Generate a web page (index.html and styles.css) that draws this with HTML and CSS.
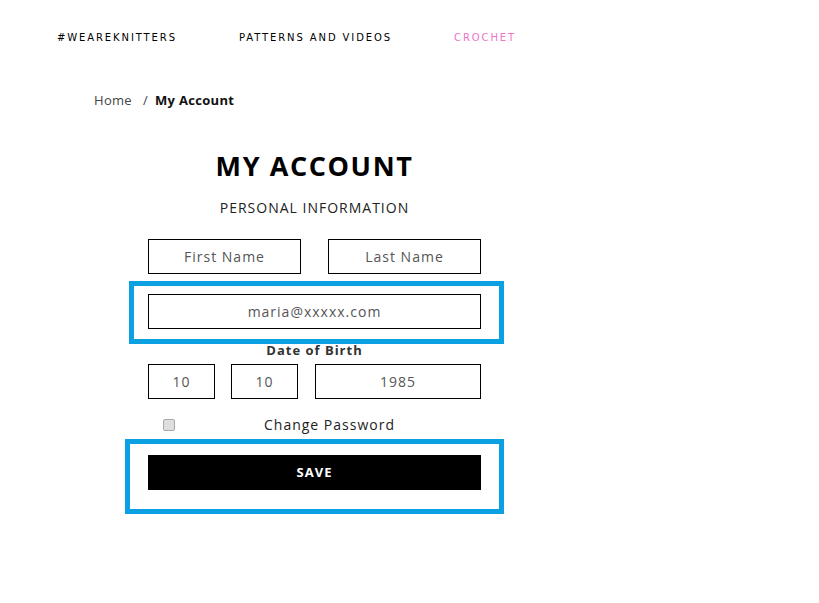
FILE: index.html
```html
<!DOCTYPE html>
<html lang="en">
<head>
<meta charset="utf-8">
<title>My Account</title>
<link rel="stylesheet" href="styles.css">
</head>
<body>
<nav class="nav">
  <a class="nav-link">#WEAREKNITTERS</a>
  <a class="nav-link">PATTERNS AND VIDEOS</a>
  <a class="nav-link nav-pink">CROCHET</a>
</nav>
<div class="crumbs"><span class="crumb-home">Home</span><span class="crumb-sep">/</span><span class="crumb-cur">My Account</span></div>
<main class="form">
  <h1 class="title">MY ACCOUNT</h1>
  <div class="subtitle">PERSONAL INFORMATION</div>
  <div class="row names">
    <input class="field" placeholder="First Name">
    <input class="field" placeholder="Last Name">
  </div>
  <div class="row email">
    <input class="field wide" value="maria@xxxxx.com">
  </div>
  <div class="dob-label">Date of Birth</div>
  <div class="row dob">
    <input class="field small" value="10">
    <input class="field small" value="10">
    <input class="field year" value="1985">
  </div>
  <div class="check-row">
    <input type="checkbox" class="check">
    <span class="check-label">Change Password</span>
  </div>
  <button class="save">SAVE</button>
</main>
<div class="hl hl-email"></div>
<div class="hl hl-save"></div>
</body>
</html>
```
FILE: styles.css
```css
* { box-sizing: border-box; }
html, body { margin: 0; padding: 0; background: #fff; }
body { width: 819px; height: 603px; position: relative; font-family: "Open Sans", "Liberation Sans", sans-serif; color: #222; }

.nav { display: flex; gap: 62px; padding: 32px 0 0 57px; font-family: "DejaVu Sans", Verdana, sans-serif; font-size: 10px; line-height: 12px; letter-spacing: 1.9px; }
.nav-link { color: #000; }
.nav-pink { color: #f073c8; }

.crumbs { margin: 47px 0 0 94px; font-size: 13px; line-height: 18px; letter-spacing: 0.3px; display: flex; }
.crumb-home { color: #444; }
.crumb-sep { margin: 0 7px 0 11px; color: #444; }
.crumb-cur { font-weight: 700; color: #111; }

.form { width: 333px; margin: 39px 0 0 148px; display: flex; flex-direction: column; align-items: center; }
.title { margin: 0; font-size: 27px; line-height: 36px; font-weight: 700; letter-spacing: 1.6px; color: #000; }
.subtitle { margin-top: 14px; font-size: 14px; line-height: 20px; letter-spacing: 1px; color: #222; }

.row { display: flex; width: 100%; }
.names { margin-top: 21px; justify-content: space-between; }
.email { margin-top: 20px; }
.dob { margin-top: 5px; }

.field { height: 35px; width: 153px; border: 1px solid #000; border-radius: 0; background: #fff; padding: 0; text-align: center; font-family: "Open Sans", "Liberation Sans", sans-serif; font-size: 14px; letter-spacing: 1px; color: #555; outline: none; }
.field::placeholder { color: #555; opacity: 1; }
.wide { width: 333px; }
.small { width: 67px; margin-right: 16px; }
.small + .small { margin-right: 17px; }
.year { width: 166px; }

.dob-label { margin-top: 12px; font-size: 13px; line-height: 18px; font-weight: 700; letter-spacing: 1px; color: #333; }

.check-row { margin-top: 16px; width: 100%; display: flex; align-items: center; height: 20px; }
.check { appearance: none; -webkit-appearance: none; margin: 0 0 0 15px; width: 12px; height: 12px; border: 1px solid #a8a8a8; border-radius: 2px; background: #dedede; }
.check-label { margin-left: 89px; font-size: 14px; line-height: 20px; letter-spacing: 1px; color: #222; }

.save { margin-top: 20px; width: 333px; height: 35px; border: 0; background: #000; color: #fff; font-family: "Open Sans", "Liberation Sans", sans-serif; font-weight: 700; font-size: 13px; line-height: 35px; letter-spacing: 1px; padding: 0; }

.hl { position: absolute; border: 5px solid #0aa0e2; }
.hl-email { left: 129px; top: 281px; width: 375px; height: 63px; }
.hl-save { left: 125px; top: 439px; width: 379px; height: 75px; }
```
